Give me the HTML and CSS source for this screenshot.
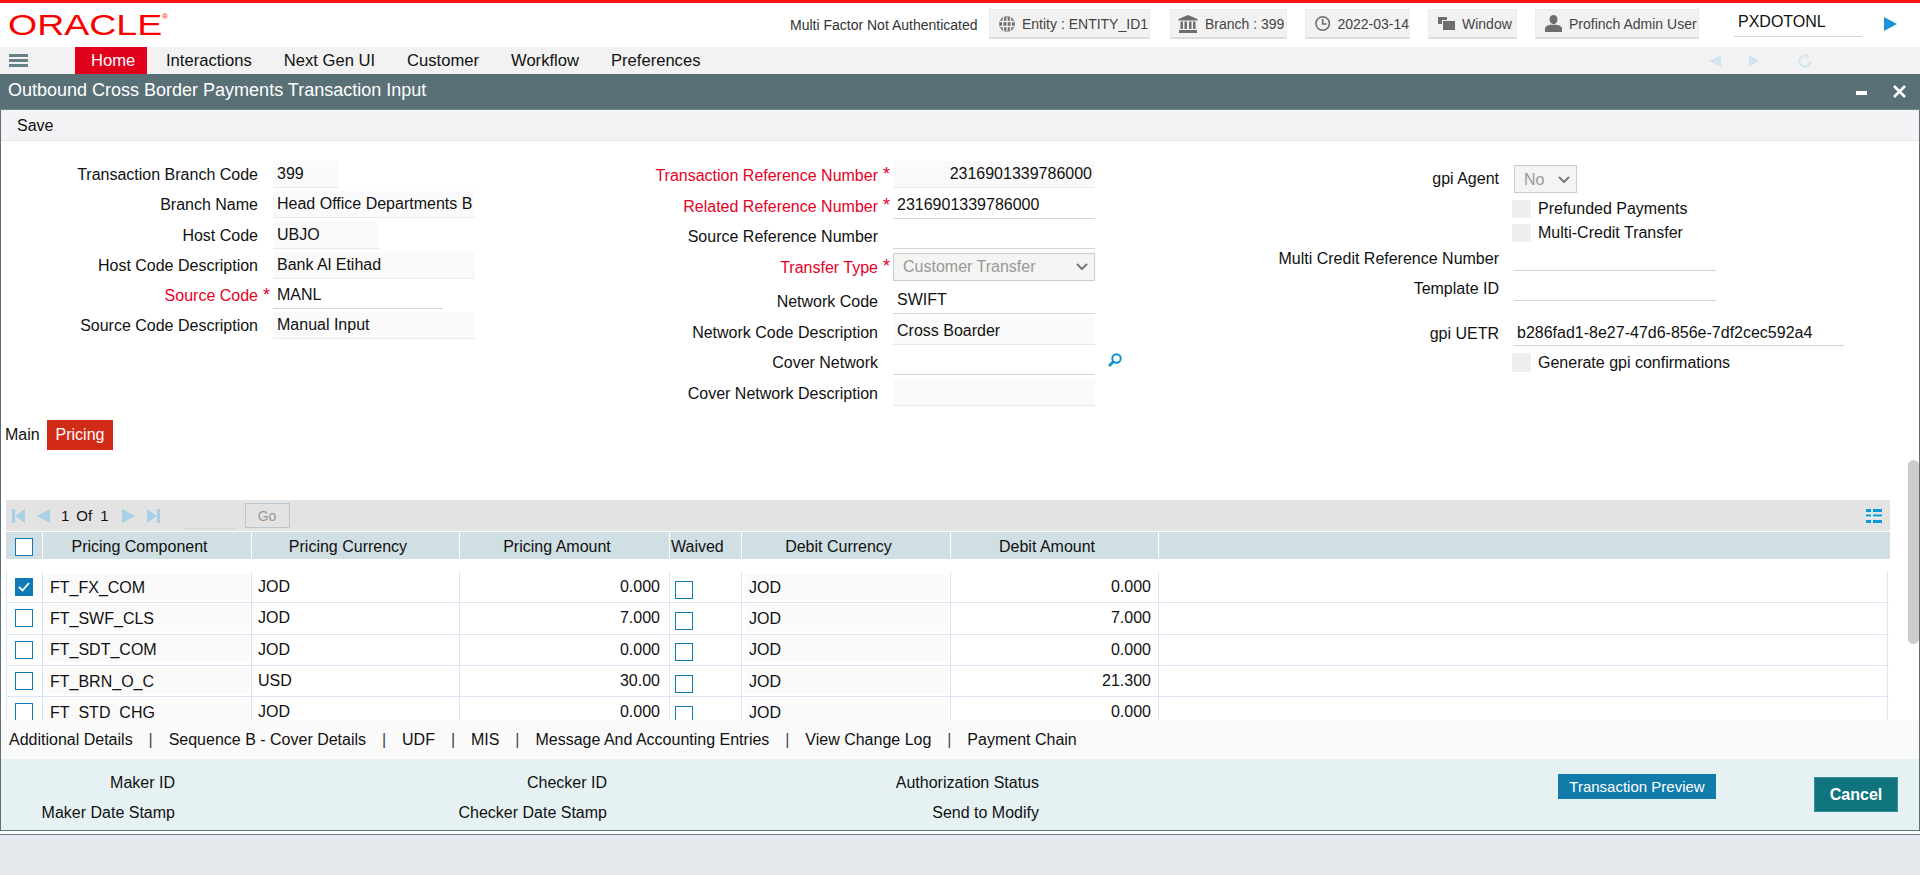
FILE: index.html
```html
<!DOCTYPE html>
<html lang="en">
<head>
    <meta charset="UTF-8">
    <meta name="viewport" content="width=device-width, initial-scale=1.0">
    <title>Outbound Cross Border Payments Transaction Input</title>
    <link rel="stylesheet" href="styles.css">
</head>
<body>
    <div class="top-line"></div>

    <header class="header">
        <div class="logo"><span class="logo-text">ORACLE</span><span class="logo-reg">®</span></div>
        <div class="mfa">Multi Factor Not Authenticated</div>
        <div class="chip chip-entity">
            <svg width="16" height="16" viewBox="0 0 16 16" fill="none" stroke="#6e6e6e" stroke-width="1.3"><circle cx="8" cy="8" r="7.2" fill="#6e6e6e"/><path stroke="#f2f2f2" d="M8 .8v14.4M1 5.5h14M1 10.5h14M5 1.5c-1.6 4-1.6 9 0 13M11 1.5c1.6 4 1.6 9 0 13"/></svg>
            <span>Entity : ENTITY_ID1</span>
        </div>
        <div class="chip chip-branch">
            <svg width="20" height="18" viewBox="0 0 20 18" fill="#6e6e6e"><path d="M10 0l9.5 4v1.5H.5V4z"/><rect x="2.5" y="6.5" width="2.5" height="7.5"/><rect x="6.5" y="6.5" width="2.5" height="7.5"/><rect x="11" y="6.5" width="2.5" height="7.5"/><rect x="15" y="6.5" width="2.5" height="7.5"/><rect x="1" y="15" width="18" height="3"/></svg>
            <span>Branch : 399</span>
        </div>
        <div class="chip chip-date">
            <svg width="16" height="17" viewBox="0 0 16 17" fill="none" stroke="#6e6e6e" stroke-width="1.7"><circle cx="8" cy="8.5" r="7"/><path d="M8 3.5v5.5h4"/></svg>
            <span>2022-03-14</span>
        </div>
        <div class="chip chip-window">
            <svg width="17" height="13" viewBox="0 0 17 13" fill="#6e6e6e"><rect width="9" height="7"/><rect x="4" y="3" width="13" height="10" fill="#f2f2f2"/><rect x="5" y="4" width="12" height="9"/></svg>
            <span>Window</span>
        </div>
        <div class="chip chip-user">
            <svg width="17" height="17" viewBox="0 0 17 17" fill="#6e6e6e"><ellipse cx="8.5" cy="4.6" rx="4" ry="4.6"/><path d="M0 17v-3.5c0-2 2.5-3 5.5-3.7h6c3 .7 5.500 1.700 5.500 3.700V17z"/></svg>
            <span>Profinch Admin User</span>
        </div>
        <div class="user-id">PXDOTONL</div>
        <svg class="user-go" width="13" height="14" viewBox="0 0 13 14" fill="#1a94d4"><path d="M0 0l13 7-13 7z"/></svg>
    </header>

    <nav class="nav">
        <div class="burger"><i></i><i></i><i></i></div>
        <a class="nav-link nav-home">Home</a>
        <a class="nav-link">Interactions</a>
        <a class="nav-link">Next Gen UI</a>
        <a class="nav-link">Customer</a>
        <a class="nav-link">Workflow</a>
        <a class="nav-link">Preferences</a>
        <div class="nav-tools">
            <svg width="12" height="12" viewBox="0 0 12 12" fill="#cfe5f0"><path d="M12 0v12L0 6z"/></svg>
            <svg width="10" height="12" viewBox="0 0 10 12" fill="#cfe5f0"><path d="M0 0v12l10-6z"/></svg>
            <svg width="14" height="15" viewBox="0 0 14 15" fill="none" stroke="#cfe5f0" stroke-width="2"><path d="M9.500 3.200a5.500 5.500 0 1 0 2.800 4.800"/><path fill="#cfe5f0" stroke="none" d="M8 0l4 3-4 3z"/></svg>
        </div>
    </nav>

    <main class="window">
        <div class="title-bar">
            <h1>Outbound Cross Border Payments Transaction Input</h1>
            <div class="title-min"></div>
            <svg class="title-close" width="13" height="13" viewBox="0 0 13 13" stroke="#fff" stroke-width="2.600"><path d="M1 1l11 11M12 1L1 12"/></svg>
        </div>
        <div class="toolbar">Save</div>

        <div class="content">
            <form class="form">
                <div class="col col-left">
                    <div class="row"><label>Transaction Branch Code</label><b class="star"></b><div class="field w-66">399</div></div>
                    <div class="row"><label>Branch Name</label><b class="star"></b><div class="field w-202">Head Office Departments B</div></div>
                    <div class="row"><label>Host Code</label><b class="star"></b><div class="field w-106">UBJO</div></div>
                    <div class="row"><label>Host Code Description</label><b class="star"></b><div class="field w-202">Bank Al Etihad</div></div>
                    <div class="row req"><label>Source Code</label><b class="star">*</b><div class="field edit w-170">MANL</div></div>
                    <div class="row"><label>Source Code Description</label><b class="star"></b><div class="field w-202">Manual Input</div></div>
                </div>

                <div class="col col-mid">
                    <div class="row req"><label>Transaction Reference Number</label><b class="star">*</b><div class="field right w-202">2316901339786000</div></div>
                    <div class="row req"><label>Related Reference Number</label><b class="star">*</b><div class="field edit w-202">2316901339786000</div></div>
                    <div class="row"><label>Source Reference Number</label><b class="star"></b><div class="field edit w-202"></div></div>
                    <div class="row req row-select"><label>Transfer Type</label><b class="star">*</b>
                        <select class="select w-202" disabled><option>Customer Transfer</option></select>
                    </div>
                    <div class="row"><label>Network Code</label><b class="star"></b><div class="field edit w-202">SWIFT</div></div>
                    <div class="row"><label>Network Code Description</label><b class="star"></b><div class="field w-202">Cross Boarder</div></div>
                    <div class="row"><label>Cover Network</label><b class="star"></b><div class="field edit w-202"></div>
                        <svg class="lookup" width="14" height="14" viewBox="0 0 14 14" fill="none" stroke="#0d8fc9" stroke-width="2"><circle cx="8.500" cy="5.500" r="4.200"/><path stroke-width="2.600" d="M5.500 8.500L1 13"/></svg>
                    </div>
                    <div class="row"><label>Cover Network Description</label><b class="star"></b><div class="field w-202"></div></div>
                </div>

                <div class="col col-right">
                    <div class="row row-agent"><label>gpi Agent</label><b class="star"></b>
                        <select class="select select-small" disabled><option>No</option></select>
                    </div>
                    <div class="check-row check-1"><span class="box-off"></span>Prefunded Payments</div>
                    <div class="check-row check-2"><span class="box-off"></span>Multi-Credit Transfer</div>
                    <div class="row row-multi"><label>Multi Credit Reference Number</label><b class="star"></b><div class="field edit w-202"></div></div>
                    <div class="row row-template"><label>Template ID</label><b class="star"></b><div class="field edit w-202"></div></div>
                    <div class="row row-uetr"><label>gpi UETR</label><b class="star"></b><div class="field edit w-330">b286fad1-8e27-47d6-856e-7df2cec592a4</div></div>
                    <div class="check-row check-3"><span class="box-off"></span>Generate gpi confirmations</div>
                </div>
            </form>

            <div class="tabs">
                <a class="tab">Main</a>
                <a class="tab tab-active">Pricing</a>
            </div>

            <section class="grid">
                <div class="pager">
                    <svg width="13" height="14" viewBox="0 0 13 14" fill="#a9d0e4"><rect width="3" height="14"/><path d="M13 0v14L3 7z"/></svg>
                    <svg class="pg-prev" width="13" height="14" viewBox="0 0 13 14" fill="#a9d0e4"><path d="M13 0v14L0 7z"/></svg>
                    <span class="pg-text">1</span><span class="pg-text pg-of">Of</span><span class="pg-text pg-total">1</span>
                    <svg class="pg-next" width="13" height="14" viewBox="0 0 13 14" fill="#a9d0e4"><path d="M0 0v14l13-7z"/></svg>
                    <svg class="pg-last" width="13" height="14" viewBox="0 0 13 14" fill="#a9d0e4"><path d="M0 0v14l10-7z"/><rect x="10" width="3" height="14"/></svg>
                    <span class="pg-input"></span>
                    <button type="button" class="pg-go" disabled>Go</button>
                    <svg class="pg-settings" width="16" height="14" viewBox="0 0 16 14"><path fill="#0d9ad8" d="M0 0h5v3H0zM7 0h9v3H7zM0 5.500h5v3H0zM7 5.500h9v3H7zM0 11h5v3H0zM7 11h9v3H7z"/><path fill="#f4f4f4" d="M0 7.500h16v1.500H0z"/></svg>
                </div>
                <div class="grid-scroll">
                    <table class="grid-table">
                        <colgroup>
                            <col class="c-check"><col class="c-wide"><col class="c-mid"><col class="c-amount"><col class="c-waived"><col class="c-wide"><col class="c-mid"><col>
                        </colgroup>
                        <thead>
                            <tr>
                                <th><span class="cb cb-head"></span></th>
                                <th>Pricing Component</th>
                                <th>Pricing Currency</th>
                                <th>Pricing Amount</th>
                                <th class="th-waived">Waived</th>
                                <th>Debit Currency</th>
                                <th>Debit Amount</th>
                                <th></th>
                            </tr>
                        </thead>
                        <tbody>
                            <tr>
                                <td class="td-check"><span class="cb cb-on"><svg width="12" height="10" viewBox="0 0 12 10" fill="none" stroke="#fff" stroke-width="1.800"><path d="M1 5l3.500 3.500L11 1"/></svg></span></td>
                                <td><div class="cell">FT_FX_COM</div></td><td class="td-plain">JOD</td><td class="num">0.000</td>
                                <td class="td-waived"><span class="cb"></span></td>
                                <td><div class="cell">JOD</div></td><td class="num num-debit">0.000</td><td class="fill"></td>
                            </tr>
                            <tr>
                                <td class="td-check"><span class="cb"></span></td>
                                <td><div class="cell">FT_SWF_CLS</div></td><td class="td-plain">JOD</td><td class="num">7.000</td>
                                <td class="td-waived"><span class="cb"></span></td>
                                <td><div class="cell">JOD</div></td><td class="num num-debit">7.000</td><td class="fill"></td>
                            </tr>
                            <tr>
                                <td class="td-check"><span class="cb"></span></td>
                                <td><div class="cell">FT_SDT_COM</div></td><td class="td-plain">JOD</td><td class="num">0.000</td>
                                <td class="td-waived"><span class="cb"></span></td>
                                <td><div class="cell">JOD</div></td><td class="num num-debit">0.000</td><td class="fill"></td>
                            </tr>
                            <tr>
                                <td class="td-check"><span class="cb"></span></td>
                                <td><div class="cell">FT_BRN_O_C</div></td><td class="td-plain">USD</td><td class="num">30.00</td>
                                <td class="td-waived"><span class="cb"></span></td>
                                <td><div class="cell">JOD</div></td><td class="num num-debit">21.300</td><td class="fill"></td>
                            </tr>
                            <tr>
                                <td class="td-check"><span class="cb"></span></td>
                                <td><div class="cell">FT_STD_CHG</div></td><td class="td-plain">JOD</td><td class="num">0.000</td>
                                <td class="td-waived"><span class="cb"></span></td>
                                <td><div class="cell">JOD</div></td><td class="num num-debit">0.000</td><td class="fill"></td>
                            </tr>
                        </tbody>
                    </table>
                </div>
            </section>

            <div class="links">
                <a>Additional Details</a><i>|</i>
                <a>Sequence B - Cover Details</a><i>|</i>
                <a>UDF</a><i>|</i>
                <a>MIS</a><i>|</i>
                <a>Message And Accounting Entries</a><i>|</i>
                <a>View Change Log</a><i>|</i>
                <a>Payment Chain</a>
            </div>

            <div class="scrollbar"></div>
        </div>

        <footer class="footer">
            <div class="foot-col foot-first"><div>Maker ID</div><div>Maker Date Stamp</div></div>
            <div class="foot-col"><div>Checker ID</div><div>Checker Date Stamp</div></div>
            <div class="foot-col"><div>Authorization Status</div><div>Send to Modify</div></div>
            <button type="button" class="btn-preview">Transaction Preview</button>
            <button type="button" class="btn-cancel">Cancel</button>
        </footer>
    </main>

    <div class="page-end"></div>
</body>
</html>
```

FILE: styles.css
```css
body {
    font-family: "Liberation Sans", Arial, sans-serif;
    font-size: 16px;
    color: #111;
    background-color: #fff;
    margin: 0;
    height: 875px;
    overflow: hidden;
}
.top-line {
    height: 3px;
    background-color: #ff1414;
}

/* header */
.header {
    display: flex;
    align-items: center;
    height: 44px;
    font-size: 14px;
}
.logo {
    position: relative;
    width: 782px;
    margin-left: 8px;
    height: 24px;
    color: #f80000;
}
.logo-text {
    display: inline-block;
    font-size: 30px;
    line-height: 24px;
    transform: scaleX(1.25);
    transform-origin: left center;
}
.logo-reg {
    position: absolute;
    left: 154px;
    top: 0;
    font-size: 8px;
    line-height: 8px;
}
.mfa {
    width: 199px;
    color: #333;
}
.chip {
    display: flex;
    align-items: center;
    gap: 7px;
    box-sizing: border-box;
    height: 30px;
    padding-left: 9px;
    margin-top: -2px;
    margin-right: 18px;
    background-color: #f2f2f2;
    border: 1px solid #ececec;
    border-bottom: 2px solid #dcdcdc;
    color: #444;
    white-space: nowrap;
}
.chip-entity { width: 161px; margin-right: 20px; }
.chip-branch { width: 117px; padding-left: 7px; }
.chip-date { width: 105px; }
.chip-window { width: 89px; }
.chip-user { width: 164px; margin-right: 35px; }
.user-id {
    box-sizing: border-box;
    width: 128px;
    height: 28px;
    margin-top: -4px;
    padding-left: 4px;
    line-height: 26px;
    font-size: 16px;
    border-bottom: 1px solid #d5d5d5;
}
.user-go {
    margin-left: 22px;
    margin-top: -3px;
}

/* main menu */
.nav {
    display: flex;
    height: 27px;
    line-height: 27px;
    font-size: 16.6px;
    background-color: #f2f2f2;
}
.burger {
    width: 19px;
    margin: 7px 47px 0 9px;
}
.burger i {
    display: block;
    height: 3px;
    margin-bottom: 2px;
    background-color: #668088;
}
.nav-link {
    margin-right: 32px;
}
.nav-home {
    width: 44px;
    padding: 0 12px 0 16px;
    margin-right: 19px;
    background-color: #e0001b;
    color: #fff;
}
.nav-tools {
    display: flex;
    align-items: center;
    margin-left: auto;
    margin-right: 108px;
}
.nav-tools svg:nth-child(2) { margin-left: 28px; }
.nav-tools svg:nth-child(3) { margin-left: 39px; }

/* window */
.window {
    display: flex;
    flex-direction: column;
    height: 757px;
    box-sizing: border-box;
    border: 1px solid #587076;
    border-top: none;
}
.title-bar {
    display: flex;
    align-items: center;
    box-sizing: border-box;
    height: 36px;
    margin: 0 -1px;
    padding: 0 14px 0 8px;
    background-color: #587076;
    border-bottom: 1px solid #6f8a93;
    color: #fff;
}
.title-bar h1 {
    margin: 0 0 3px;
    font-size: 18px;
    font-weight: normal;
}
.title-min {
    width: 11px;
    height: 4px;
    margin-left: auto;
    margin-top: 2px;
    background-color: #fff;
}
.title-close {
    margin-left: 26px;
}
.toolbar {
    height: 30px;
    line-height: 31px;
    padding-left: 16px;
    background-color: #f3f3f5;
    border-bottom: 1px solid #e4e4e4;
}
.content {
    position: relative;
    flex: 1;
    overflow: hidden;
}

/* form */
.form {
    display: flex;
    height: 278px;
}
.col {
    box-sizing: border-box;
    padding-top: 20px;
}
.col-left { width: 500px; }
.col-mid { width: 700px; }
.col-right {
    padding-top: 24px;
}
.row {
    display: flex;
    align-items: flex-start;
    height: 30.3px;
}
.row label {
    text-align: right;
    line-height: 27px;
    white-space: nowrap;
}
.col-left label { width: 257px; }
.col-mid label { width: 377px; }
.col-right label { width: 298px; }
.star {
    width: 15px;
    flex: none;
    padding-left: 5px;
    box-sizing: border-box;
    color: #e60026;
    font-weight: normal;
    font-size: 18px;
    line-height: 27px;
}
.req label {
    color: #e60026;
}
.field {
    box-sizing: border-box;
    height: 27px;
    padding: 0 4px;
    line-height: 26px;
    white-space: nowrap;
    background-color: #fafafa;
    border-bottom: 1px solid #e9e9e9;
}
.field.edit {
    background-color: #fff;
    border-bottom-color: #d5d5d5;
}
.field.right {
    text-align: right;
    padding-right: 3px;
}
.w-66 { width: 66px; }
.w-106 { width: 106px; }
.w-170 { width: 170px; }
.w-202 { width: 202px; }
.w-330 { width: 330px; }
.col-mid .row { height: 30.5px; }
.col-mid .row-select { height: 34.5px; }
.col-mid label { padding-top: 1px; }
.select {
    appearance: none;
    height: 28px;
    padding-left: 9px;
    font-family: inherit;
    font-size: 16px;
    color: #999;
    background-color: #f4f4f2;
    background-image: url("data:image/svg+xml,%3Csvg xmlns='http://www.w3.org/2000/svg' width='12' height='7' viewBox='0 0 12 7'%3E%3Cpath d='M1 1l5 5 5-5' fill='none' stroke='%23777' stroke-width='2'/%3E%3C/svg%3E");
    background-repeat: no-repeat;
    background-position: right 6px center;
    border: 1px solid #ccc;
    border-radius: 0;
    opacity: 1;
}
.select-small {
    width: 63px;
    padding-left: 9px;
}
.lookup {
    margin: 5px 0 0 13px;
}
.row-agent { height: 28px; }
.row-multi { height: 26px; margin-top: 3px; }
.row-template { height: 26px; margin-top: 4px; }
.row-uetr { height: 26px; margin-top: 19px; }
.row-multi .field, .row-template .field, .row-uetr .field { height: 26px; }
.row-uetr .field { padding-left: 3px; }
.check-row {
    display: flex;
    align-items: center;
    height: 18px;
    margin-left: 311px;
}
.check-1 { margin-top: 7px; }
.check-2 { margin-top: 6px; }
.check-3 { margin-top: 7px; height: 19px; }
.box-off {
    flex: none;
    width: 19px;
    height: 100%;
    margin-right: 7px;
    background-color: #efefef;
}

/* tabs */
.tabs {
    display: flex;
    height: 30px;
    line-height: 30px;
    margin-top: 1px;
}
.tab {
    width: 42px;
    padding-left: 4px;
}
.tab-active {
    width: 66px;
    padding: 0;
    text-align: center;
    background-color: #d12a16;
    color: #fff;
}

/* pricing grid */
.grid {
    margin: 50px 0 0 5px;
    width: 1884px;
}
.pager {
    display: flex;
    align-items: center;
    box-sizing: border-box;
    height: 31px;
    margin-bottom: 1px;
    padding-left: 6px;
    background-color: #e3e3e3;
}
.pg-prev { margin-left: 12px; }
.pg-text { margin-left: 11px; font-size: 15px; }
.pg-of { margin-left: 7px; }
.pg-total { margin-left: 8px; }
.pg-next { margin-left: 13px; }
.pg-last { margin-left: 12px; }
.pg-input {
    width: 51px;
    height: 25px;
    margin-left: 24px;
    border-bottom: 1px solid #d5d5d5;
}
.pg-go {
    box-sizing: border-box;
    width: 45px;
    height: 25px;
    margin-left: 10px;
    padding: 0;
    font-family: inherit;
    font-size: 14px;
    color: #999;
    background: transparent;
    border: 1px solid #b9c7d3;
}
.pg-settings {
    margin-left: auto;
    margin-right: 8px;
}
.grid-scroll {
    height: 188px;
    overflow: hidden;
}
.grid-table {
    width: 100%;
    table-layout: fixed;
    border-collapse: separate;
    border-spacing: 0;
}
.c-check { width: 37px; }
.c-wide { width: 209px; }
.c-mid { width: 208px; }
.c-amount { width: 210px; }
.c-waived { width: 72px; }
.grid-table th {
    height: 40px;
    padding: 2px 15px 0 0;
    box-sizing: border-box;
    font-weight: normal;
    background-color: #d0dfe3;
    background-clip: padding-box;
    border-right: 1px solid #fff;
    border-bottom: 13px solid #fff;
}
.grid-table th.th-waived {
    padding: 2px 0 0 1px;
    text-align: left;
}
.grid-table th:last-child {
    border-right: none;
}
.grid-table td {
    box-sizing: border-box;
    height: 31.33px;
    padding: 0;
    border-right: 1px solid #dbe4f2;
    border-bottom: 1px solid #dbe4f2;
    white-space: nowrap;
}
.grid-table td:first-child {
    border-left: 1px solid #dbe4f2;
}
.cell {
    box-sizing: border-box;
    height: 26px;
    margin: 0 1px 1px 3px;
    padding-left: 4px;
    line-height: 27px;
    background-color: #fafafa;
}
.grid-table .td-plain {
    padding-left: 6px;
    background-color: #fff;
}
.grid-table .num {
    padding-right: 9px;
    text-align: right;
}
.grid-table .num-debit {
    padding-right: 7px;
}
.grid-table .fill {
    border-right: 2px solid #fff;
    box-shadow: inset -1px 0 #dbe4f2;
}
.cb {
    display: flex;
    align-items: center;
    justify-content: center;
    box-sizing: border-box;
    width: 18px;
    height: 18px;
    background-color: #fff;
    border: 1px solid #0f7ab3;
}
.cb-head { margin: 0 0 0 9px; }
.cb-on { background-color: #0f7ab3; }
.td-check .cb { margin-left: 8px; margin-top: 0; }
.td-waived .cb { margin: 5px 0 0 5px; }

/* links under the grid */
.links {
    display: flex;
    height: 39px;
    line-height: 39px;
    padding-left: 8px;
    background-color: #fafafa;
}
.links i {
    width: 36px;
    text-align: center;
    font-style: normal;
    color: #444;
}
.scrollbar {
    position: absolute;
    right: 0;
    top: 319px;
    width: 11px;
    height: 184px;
    border-radius: 6px;
    background-color: #ccc;
}

/* footer */
.footer {
    display: flex;
    box-sizing: border-box;
    height: 71px;
    flex: none;
    padding-top: 9px;
    background-color: #e5f1f3;
}
.foot-col {
    width: 432px;
    text-align: right;
    line-height: 30px;
}
.foot-first { width: 174px; }
.btn-preview {
    align-self: flex-start;
    width: 158px;
    height: 25px;
    margin: 6px 0 0 auto;
    padding: 0;
    border: none;
    font-family: inherit;
    font-size: 15px;
    color: #fff;
    background-color: #117ba9;
}
.btn-cancel {
    align-self: flex-start;
    width: 84px;
    height: 35px;
    margin: 9px 21px 0 98px;
    padding: 0;
    font-family: inherit;
    font-size: 16px;
    font-weight: bold;
    color: #fff;
    background-color: #10747f;
    border: 1px solid #3a8d97;
}
.page-end {
    height: 41px;
    margin-top: 3px;
    background-color: #e5e9ee;
    border-top: 1px solid #6f7f9a;
}
```
